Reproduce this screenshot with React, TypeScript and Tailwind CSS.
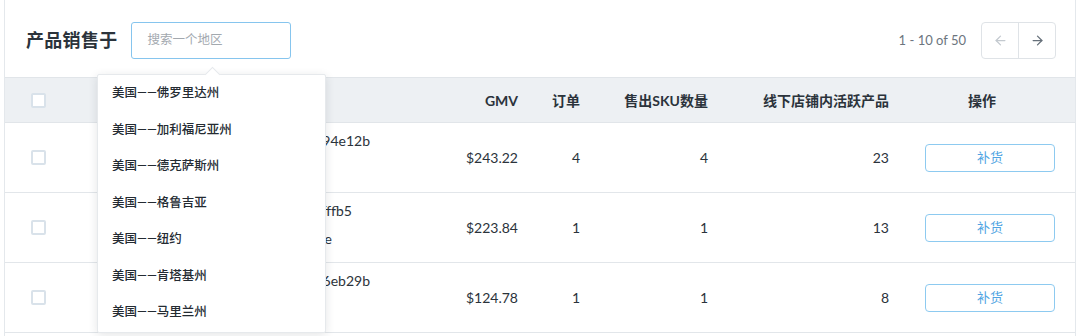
import { ArrowLeft, ArrowRight } from 'lucide-react';

const regions = [
  '美国——佛罗里达州',
  '美国——加利福尼亚州',
  '美国——德克萨斯州',
  '美国——格鲁吉亚',
  '美国——纽约',
  '美国——肯塔基州',
  '美国——马里兰州',
];

const rows = [
  { lines: [['5e9a094e12b', 'w-[295px]'], ['Cotton Tee', 'w-[230px]']], gmv: '$243.22', orders: 4, sku: 4, active: 23 },
  { lines: [['5e9a4a8fffb5', 'w-[277px]'], ['Shirt - White', 'w-[257px]']], gmv: '$223.84', orders: 1, sku: 1, active: 13 },
  { lines: [['5e9a16eb29b', 'w-[295px]'], ['Denim Jacket', 'w-[200px]']], gmv: '$124.78', orders: 1, sku: 1, active: 8 },
];

const cols = 'grid grid-cols-[70px_325px_130px_62px_128px_181px_1fr]';

function Checkbox() {
  return <span className="block w-[15px] h-[15px] rounded-[2px] border-2 border-[#d9e2ea] bg-white" />;
}

export default function App() {
  return (
    <div
      className="relative w-[1080px] h-[336px] overflow-hidden bg-white text-[#2b333b]"
      style={{ fontFamily: 'Lato, "Noto Sans CJK SC", sans-serif' }}
    >
      <div className="mx-[4px] h-full border-x border-[#e4e8ec]">
        {/* top bar */}
        <div className="flex h-[77px] items-center pl-[21px] pr-[19px] pt-[4px]">
          <h1 className="text-[18px] font-bold tracking-[0.3px]">产品销售于</h1>
          <div className="ml-[13px] flex h-[37px] w-[160px] items-center rounded-[3px] border border-[#86c5ee] pl-[16px] text-[12.5px] text-[#a3a9af]">
            搜索一个地区
          </div>
          <div className="ml-auto flex items-center">
            <span className="text-[13px] text-[#6c757e]">1 - 10 of 50</span>
            <div className="ml-[15px] flex h-[37px] rounded-[4px] border border-[#dfe3e7]">
              <button className="flex w-[37px] items-center justify-center border-r border-[#dfe3e7] text-[#c3c9cf]">
                <ArrowLeft size={15} strokeWidth={2} />
              </button>
              <button className="flex w-[36px] items-center justify-center text-[#66707a]">
                <ArrowRight size={15} strokeWidth={2} />
              </button>
            </div>
          </div>
        </div>

        {/* table head */}
        <div className={`${cols} h-[46px] items-center border-y border-[#e1e5e9] bg-[#edf0f3] text-[14px] font-bold`}>
          <div className="pl-[26px]"><Checkbox /></div>
          <div />
          <div className="pr-[12px] text-right">GMV</div>
          <div className="pr-[12px] text-right">订单</div>
          <div className="pr-[12px] text-right">售出SKU数量</div>
          <div className="pr-[12px] text-right">线下店铺内活跃产品</div>
          <div className="text-center pr-[12px]">操作</div>
        </div>

        {/* rows */}
        {rows.map((r, i) => (
          <div key={i} className={`${cols} h-[70px] items-center border-b border-[#e2e6ea] text-[14px]`}>
            <div className="pl-[26px]"><Checkbox /></div>
            <div className="flex flex-col pb-[5px] leading-[28px] whitespace-nowrap">
              {r.lines.map(([t, w], j) => (
                <div key={j} className={`${w} text-right`}>{t}</div>
              ))}
            </div>
            <div className="pr-[12px] text-right">{r.gmv}</div>
            <div className="pr-[12px] text-right">{r.orders}</div>
            <div className="pr-[12px] text-right">{r.sku}</div>
            <div className="pr-[12px] text-right">{r.active}</div>
            <div className="pl-[24px]">
              <button className="h-[28px] w-[130px] rounded-[4px] border border-[#8dcaf0] text-[13px] text-[#4ea3e2]">
                补货
              </button>
            </div>
          </div>
        ))}
      </div>

      {/* region dropdown */}
      <div className="absolute left-[97px] top-[74px] w-[229px] rounded-[2px] border border-[#e6e9ec] bg-white py-[0.5px] shadow-[0_2px_10px_rgba(30,40,50,0.12)]">
        <span className="absolute left-[109px] top-[-6px] h-[11px] w-[11px] rotate-45 border-l border-t border-[#e6e9ec] bg-white" />
        {regions.map((r) => (
          <div key={r} className="relative flex h-[36.5px] items-center px-[14px] text-[12.5px] font-medium text-[#242b32]">
            {r}
          </div>
        ))}
      </div>
    </div>
  );
}
